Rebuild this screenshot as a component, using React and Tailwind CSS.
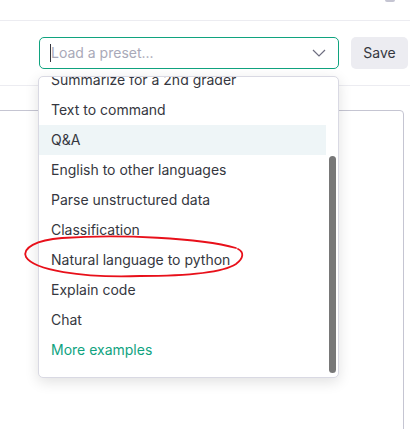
import React, { useEffect, useRef } from "react";

const presets = [
  "Default",
  "Grammar correction",
  "Q&A",
  "Summarize for a 2nd grader",
  "Text to command",
  "Q&A",
  "English to other languages",
  "Parse unstructured data",
  "Classification",
  "Natural language to python",
  "Explain code",
  "Chat",
];

const App = () => {
  const listRef = useRef(null);

  // menu is shown scrolled part way down
  useEffect(() => {
    if (listRef.current) listRef.current.scrollTop = 110;
  }, []);

  return (
    <div
      className="relative w-[410px] h-[429px] overflow-hidden bg-white text-[#353740]"
      style={{ fontFamily: "Inter, 'Noto Sans', sans-serif" }}
    >
      {/* Top bar */}
      <div className="h-[21px] border-b border-[#ececf1] flex justify-end pr-[15px]">
        <div className="w-[10px] h-[2px] rounded-b bg-[#c5c5d2]" />
      </div>

      {/* Toolbar */}
      <div className="flex justify-end items-center gap-3 pt-4 pb-4 pr-[2px] border-b border-[#ececf1]">
        <div className="relative w-[300px]">
          <div className="h-8 flex items-center justify-between pl-[10px] pr-[12px] border border-[#10a37f] rounded-[5px]">
            <div className="flex items-center gap-0 text-sm text-[#a9a9b8]">
              <span className="w-px h-[18px] bg-[#353740]" />
              <span>Load a preset...</span>
            </div>
            <svg width="14" height="8" viewBox="0 0 14 8" fill="none">
              <polyline points="1,1 7,7 13,1" stroke="#6e6e80" strokeWidth="1.2" />
            </svg>
          </div>

          {/* Dropdown menu */}
          <div className="absolute -left-px top-[39px] z-10 w-[301px] h-[302px] bg-white border border-[#d9d9e3] rounded-[5px] shadow-[0_4px_14px_rgba(0,0,0,0.12)]">
            <div ref={listRef} className="h-full overflow-hidden pr-3 pt-2 pb-3">
              {presets.map((p, i) => (
                <div
                  key={i}
                  className={`h-[30px] flex items-center pl-3 text-sm ${
                    i === 5 ? "bg-[#eef5f7]" : ""
                  }`}
                >
                  {p}
                </div>
              ))}
              <div className="h-[30px] flex items-center pl-3 text-sm text-[#10a37f]">
                More examples
              </div>
            </div>
            <div className="absolute right-[2px] top-[79px] w-[7px] h-[217px] rounded-full bg-[#787878]" />
          </div>
        </div>
        <button className="w-[57px] h-8 rounded-[5px] bg-[#ececf1] text-sm text-[#353740]">
          Save
        </button>
      </div>

      {/* Editor area */}
      <div className="pt-6 pr-[6px] -ml-1">
        <div className="h-[400px] border border-[#c5c5d2] rounded-tr-[4px]" />
      </div>

      {/* Annotation */}
      <svg
        className="absolute left-0 top-0 z-20 pointer-events-none"
        width="410"
        height="429"
      >
        <path
          d="M236 248 C 200 238, 120 234, 62 238 C 36 240, 22 248, 26 257 C 34 270, 80 278, 140 276 C 190 276, 222 273, 236 264 C 244 258, 244 252, 238 249"
          stroke="#e8101a"
          strokeWidth="1.8"
          fill="none"
          strokeLinecap="round"
        />
      </svg>
    </div>
  );
};

export default App;
